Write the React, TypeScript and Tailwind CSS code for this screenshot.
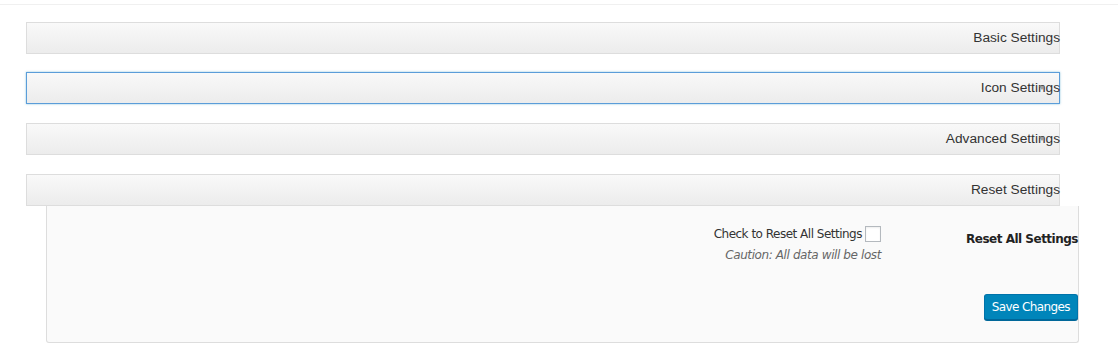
import React from "react";

const Arrow = () => (
  <svg className="absolute right-[14px] top-[13px]" width="6" height="5" viewBox="0 0 6 5">
    <path d="M0 0 L6 0 L3 4 Z" fill="#8a8a8a" fillOpacity="0.8" />
  </svg>
);

function Bar({ label, active, arrow, className }: { label: string; active?: boolean; arrow?: boolean; className?: string }) {
  return (
    <div
      className={
        "relative ml-[26px] w-[1034px] h-[32px] flex items-center justify-end border bg-gradient-to-b from-[#f9f9f9] to-[#ececec] " +
        (active ? "border-[#5b9dd9] shadow-[0_0_2px_rgba(30,140,190,0.5)] " : "border-[#dddddd] ") +
        (className ?? "")
      }
    >
      <span className="text-[13.7px] text-[#333] leading-none font-['Liberation_Sans',Arial,sans-serif] -mr-[1px]">
        {label}
      </span>
      {arrow && <Arrow />}
    </div>
  );
}

export default function App() {
  return (
    <div className="w-[1118px] h-[363px] bg-white overflow-hidden">
      <div className="h-[5px] border-b border-[#f0f0f0]" />
      <Bar label="Basic Settings" className="mt-[17px]" />
      <Bar label="Icon Settings" active arrow className="mt-[18px]" />
      <Bar label="Advanced Settings" arrow className="mt-[19px]" />
      <Bar label="Reset Settings" className="mt-[19px]" />
      <div className="ml-[46px] w-[1033px] h-[137px] bg-[#fafafa] border border-t-0 border-[#dddddd] rounded-b-[3px] font-['DejaVu_Sans',Verdana,sans-serif] text-[#333]">
        <div className="flex justify-end pt-[19px]">
          <div className="flex flex-col items-end">
            <div className="flex items-center gap-[3px]">
              <span className="text-[12px] leading-[18px] tracking-[-0.5px]">Check to Reset All Settings</span>
              <span className="w-[16px] h-[16px] border border-[#b4b9be] bg-white shadow-[inset_0_1px_2px_rgba(0,0,0,0.07)]" />
            </div>
            <span className="mt-[3px] text-[12px] italic text-[#666] leading-[18px] tracking-[-0.4px]">Caution: All data will be lost</span>
          </div>
          <div className="w-[197px] flex justify-end pt-[5px]">
            <span className="text-[12px] font-bold leading-[18px] text-[#222] tracking-[-0.5px]">Reset All Settings</span>
          </div>
        </div>
        <div className="flex justify-end pt-[30px]">
          <button className="h-[26px] px-[7px] bg-[#0085ba] border border-[#0073aa] border-b-[#006799] rounded-[3px] text-white text-[12px] tracking-[-0.6px] shadow-[0_1px_0_#006799]">
            Save Changes
          </button>
        </div>
      </div>
    </div>
  );
}
